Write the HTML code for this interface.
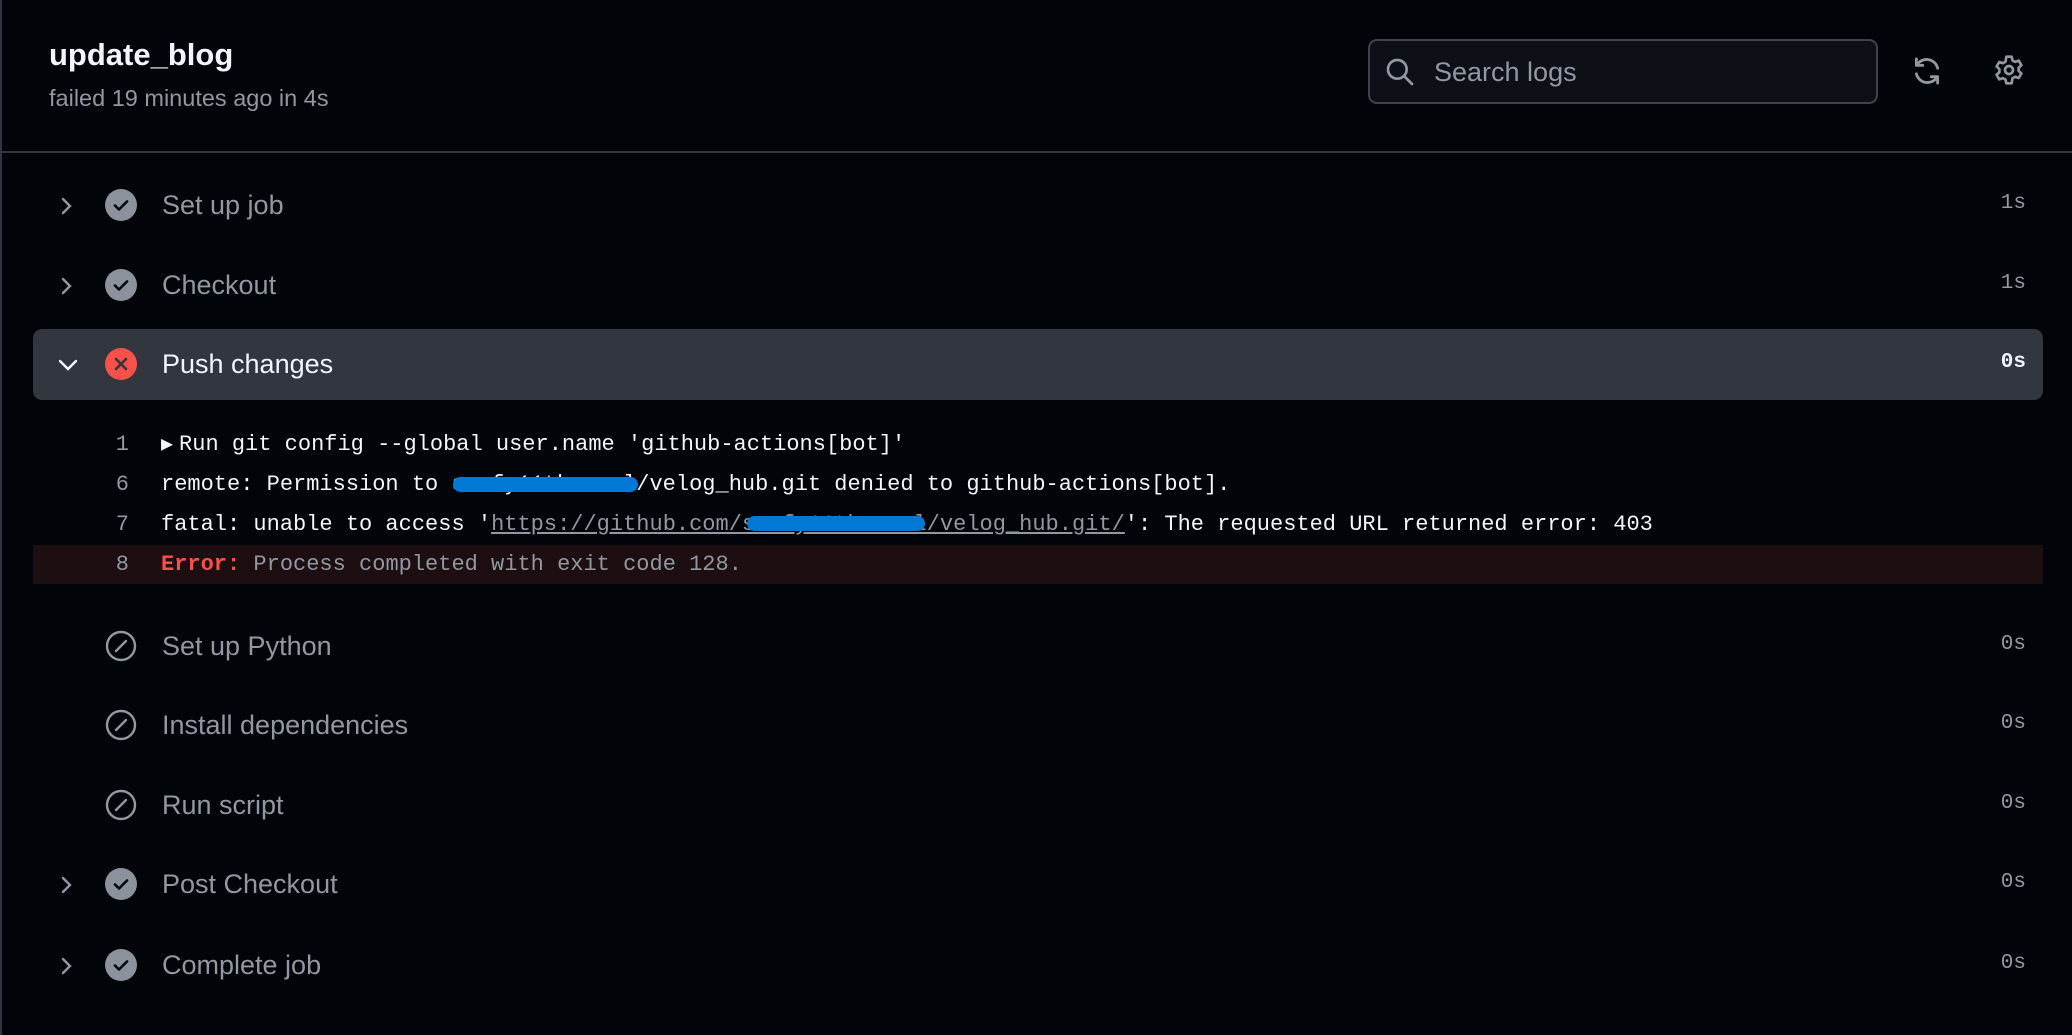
<!DOCTYPE html>
<html><head><meta charset="utf-8"><style>
*{margin:0;padding:0;box-sizing:border-box}
body{width:2072px;height:1035px;background:#010409;overflow:hidden;position:relative;font-family:"Liberation Sans",sans-serif;color:#f0f6fc}
.abs{position:absolute}
.vl{left:0;top:0;width:2px;height:1035px;background:#30363d}
.hl{left:0;top:151px;width:2072px;height:2px;background:#30363d}
.title{left:49px;top:37px;font-size:31px;font-weight:bold;color:#f0f6fc}
.sub{left:49px;top:85px;font-size:23.5px;color:#9198a1}
.search{left:1368px;top:39px;width:510px;height:65px;border:2px solid #3d444d;border-radius:9px;background:#0d1117}
.search span{position:absolute;left:64px;top:16px;font-size:27px;color:#9198a1}
.row{position:absolute;left:33px;width:2010px;height:71px}
.row .chev{position:absolute;left:22px;top:24px}
.row .ic{position:absolute;left:72px;top:19px}
.row .name{position:absolute;left:129px;top:20px;font-size:27px;color:#9198a1}
.row .t{position:absolute;right:17px;top:22px;font-family:"Liberation Mono",monospace;font-size:21px;color:#9198a1}
.sel{background:#32363e;border-radius:9px}
.sel .name{color:#f0f6fc}
.sel .t{color:#f0f6fc;font-weight:bold}
.log{position:absolute;left:33px;width:2010px;height:39px;font-family:"Liberation Mono",monospace;font-size:22px;line-height:39px;white-space:pre;color:#f0f6fc}
.log .n{position:absolute;left:0;width:96px;text-align:right;color:#9198a1}
.log .c{position:absolute;left:128px}
.err{background:#1d0e12}
.red{position:absolute;height:15px;background:#0078d4;border-radius:8px}
a{color:#9198a1;text-decoration:underline}
</style></head><body>
<div class="abs vl"></div>
<div class="abs hl"></div>
<div class="abs title">update_blog</div>
<div class="abs sub">failed 19 minutes ago in 4s</div>
<div class="abs search">
<svg class="abs" style="left:14px;top:15px" width="32" height="32" viewBox="0 0 24 24" fill="none" stroke="#9198a1" stroke-width="2" stroke-linecap="round"><circle cx="10" cy="10" r="7"/><path d="M15 15l6 6"/></svg>
<span>Search logs</span></div>
<svg class="abs" style="left:1910px;top:54px" width="34" height="34" viewBox="0 0 24 24" fill="none" stroke="#9198a1" stroke-width="2" stroke-linecap="round" stroke-linejoin="round"><path d="M19.5 10A8 8 0 0 0 5 7.5"/><path d="M4.5 3.5v4.5h4.5"/><path d="M4.5 14a8 8 0 0 0 14.5 2.5"/><path d="M19.5 20.5v-4.5h-4.5"/></svg>
<svg class="abs" style="left:1993px;top:54px" width="32" height="32" viewBox="0 0 24 24" fill="none" stroke="#9198a1" stroke-width="2" stroke-linejoin="round"><path d="M10 2h4l.6 2.8 2 1.1 2.7-.9 2 3.4-2.1 1.9v2.4l2.1 1.9-2 3.4-2.7-.9-2 1.1L14 22h-4l-.6-2.8-2-1.1-2.7.9-2-3.4 2.1-1.9V11.3L2.7 9.4l2-3.4 2.7.9 2-1.1z"/><circle cx="12" cy="12" r="3"/></svg>

<div class="row" style="top:170px"><svg class="chev" width="22" height="24" viewBox="0 0 22 24" fill="none" stroke="#9198a1" stroke-width="2.4" stroke-linecap="round"><path d="M8 5l7 7-7 7"/></svg><svg class="ic" width="32" height="32" viewBox="0 0 32 32"><circle cx="16" cy="16" r="16" fill="#8b929c"/><path d="M10 16.5l4 4 8-8" fill="none" stroke="#010409" stroke-width="2.6" stroke-linecap="round" stroke-linejoin="round"/></svg><div class="name">Set up job</div><div class="t">1s</div></div>
<div class="row" style="top:250px"><svg class="chev" width="22" height="24" viewBox="0 0 22 24" fill="none" stroke="#9198a1" stroke-width="2.4" stroke-linecap="round"><path d="M8 5l7 7-7 7"/></svg><svg class="ic" width="32" height="32" viewBox="0 0 32 32"><circle cx="16" cy="16" r="16" fill="#8b929c"/><path d="M10 16.5l4 4 8-8" fill="none" stroke="#010409" stroke-width="2.6" stroke-linecap="round" stroke-linejoin="round"/></svg><div class="name">Checkout</div><div class="t">1s</div></div>
<div class="row sel" style="top:329px"><svg class="chev" width="26" height="24" viewBox="0 0 26 24" fill="none" stroke="#f0f6fc" stroke-width="2.4" stroke-linecap="round"><path d="M5 8l8 8 8-8"/></svg><svg class="ic" width="32" height="32" viewBox="0 0 32 32"><circle cx="16" cy="16" r="16" fill="#f85149"/><path d="M11 11l10 10M21 11l-10 10" stroke="#32363e" stroke-width="2.6" stroke-linecap="round"/></svg><div class="name">Push changes</div><div class="t">0s</div></div>

<div class="log" style="top:425px"><span class="n">1</span><span class="c"><span style="font-size:20px;margin-right:6px">▶</span>Run git config --global user.name 'github-actions[bot]'</span></div>
<div class="log" style="top:465px"><span class="n">6</span><span class="c">remote: Permission to ssafy11thseoul/velog_hub.git denied to github-actions[bot].</span></div>
<div class="red" style="left:453px;top:477px;width:185px"></div>
<div class="log" style="top:505px"><span class="n">7</span><span class="c">fatal: unable to access '<a>https://github.com/ssafy11thseoul/velog_hub.git/</a>': The requested URL returned error: 403</span></div>
<div class="red" style="left:747px;top:516px;width:178px"></div>
<div class="log err" style="top:545px"><span class="n">8</span><span class="c"><b style="color:#f85149">Error:</b> <span style="color:#9198a1">Process completed with exit code 128.</span></span></div>

<div class="row" style="top:611px"><svg class="ic" width="32" height="32" viewBox="0 0 32 32" fill="none" stroke="#9198a1" stroke-width="2.4" stroke-linecap="round"><circle cx="16" cy="16" r="14"/><path d="M11 21l10-10"/></svg><div class="name">Set up Python</div><div class="t">0s</div></div>
<div class="row" style="top:690px"><svg class="ic" width="32" height="32" viewBox="0 0 32 32" fill="none" stroke="#9198a1" stroke-width="2.4" stroke-linecap="round"><circle cx="16" cy="16" r="14"/><path d="M11 21l10-10"/></svg><div class="name">Install dependencies</div><div class="t">0s</div></div>
<div class="row" style="top:770px"><svg class="ic" width="32" height="32" viewBox="0 0 32 32" fill="none" stroke="#9198a1" stroke-width="2.4" stroke-linecap="round"><circle cx="16" cy="16" r="14"/><path d="M11 21l10-10"/></svg><div class="name">Run script</div><div class="t">0s</div></div>
<div class="row" style="top:849px"><svg class="chev" width="22" height="24" viewBox="0 0 22 24" fill="none" stroke="#9198a1" stroke-width="2.4" stroke-linecap="round"><path d="M8 5l7 7-7 7"/></svg><svg class="ic" width="32" height="32" viewBox="0 0 32 32"><circle cx="16" cy="16" r="16" fill="#8b929c"/><path d="M10 16.5l4 4 8-8" fill="none" stroke="#010409" stroke-width="2.6" stroke-linecap="round" stroke-linejoin="round"/></svg><div class="name">Post Checkout</div><div class="t">0s</div></div>
<div class="row" style="top:930px"><svg class="chev" width="22" height="24" viewBox="0 0 22 24" fill="none" stroke="#9198a1" stroke-width="2.4" stroke-linecap="round"><path d="M8 5l7 7-7 7"/></svg><svg class="ic" width="32" height="32" viewBox="0 0 32 32"><circle cx="16" cy="16" r="16" fill="#8b929c"/><path d="M10 16.5l4 4 8-8" fill="none" stroke="#010409" stroke-width="2.6" stroke-linecap="round" stroke-linejoin="round"/></svg><div class="name">Complete job</div><div class="t">0s</div></div>
</body></html>
